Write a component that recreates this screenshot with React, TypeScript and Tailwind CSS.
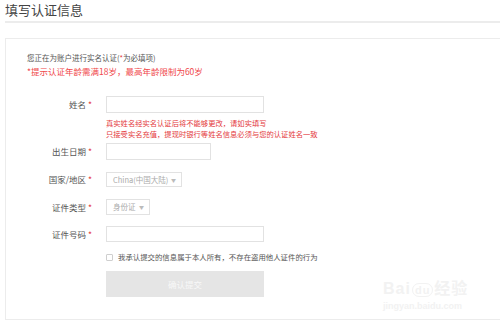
import React from 'react';

const font = { fontFamily: '"Noto Sans CJK SC", "Noto Sans", sans-serif' };

function Label({ text }: { text: string }) {
  return (
    <div className="w-[100px] shrink-0 pr-[14px] text-right text-[8.5px] leading-none text-[#555] whitespace-nowrap">
      {text} <span className="text-[#e4393c]">*</span>
    </div>
  );
}

function Select({ value, width }: { value: string; width: string }) {
  return (
    <div className={`${width} h-full flex items-center justify-between border border-[#e2e2e2] pl-[6px] pr-[5px] text-[7.5px] text-[#aaa] whitespace-nowrap`}>
      <span>{value}</span>
      <span className="text-[5px] text-[#bbb]">▼</span>
    </div>
  );
}

export default function App() {
  return (
    <div className="relative w-[500px] h-[322px] overflow-hidden bg-white" style={font}>
      <div className="h-[21px] pl-[5px] pt-[2px] text-[13px] leading-[15px] text-[#444]">填写认证信息</div>
      <div className="ml-[5px] h-[2px] bg-[#ececec]" />

      <div className="ml-[5px] mt-[15px] h-[282px] border border-r-0 border-[#ececec]">
        <div className="pl-[21px] pt-[14px]">
          <div className="text-[7.5px] leading-[10px] text-[#555]">
            您正在为账户进行实名认证(<span className="text-[#e4393c]">*</span>为必填项)
          </div>
          <div className="mt-[2px] text-[8.5px] leading-[12px] text-[#f0484b] whitespace-nowrap">*提示认证年龄需满18岁，最高年龄限制为60岁</div>
        </div>

        <div className="mt-[19px]">
          <div className="flex items-center h-[17px]">
            <Label text="姓名" />
            <div className="w-[158px] h-full border border-[#e2e2e2]" />
          </div>
          <div className="ml-[100px] mt-[5px] text-[7.3px] leading-[11px] text-[#e4393c] whitespace-nowrap">
            <div>真实姓名经实名认证后将不能够更改，请如实填写</div>
            <div>只接受实名充值，提现时银行等姓名信息必须与您的认证姓名一致</div>
          </div>

          <div className="mt-[3px] flex items-center h-[17px]">
            <Label text="出生日期" />
            <div className="w-[105px] h-full border border-[#e2e2e2]" />
          </div>

          <div className="mt-[12px] flex items-center h-[15px]">
            <Label text="国家/地区" />
            <Select value="China(中国大陆)" width="w-[76px]" />
          </div>

          <div className="mt-[12px] flex items-center h-[16px]">
            <Label text="证件类型" />
            <Select value="身份证" width="w-[44px]" />
          </div>

          <div className="mt-[11px] flex items-center h-[16px]">
            <Label text="证件号码" />
            <div className="w-[158px] h-full border border-[#e2e2e2]" />
          </div>

          <div className="ml-[100px] mt-[10px] flex items-center gap-[5px]">
            <div className="w-[7px] h-[7px] border border-[#cfcfcf] rounded-[1px]" />
            <span className="text-[7.4px] leading-[10px] text-[#555] whitespace-nowrap">我承认提交的信息属于本人所有，不存在盗用他人证件的行为</span>
          </div>

          <div className="ml-[100px] mt-[9px] w-[158px] h-[26px] flex items-center justify-center bg-[#e5e5e5] text-[8.5px] text-[#f8f8f8]">
            确认提交
          </div>
        </div>
      </div>

      <div className="absolute left-[383px] top-[280px] text-[#f2f2f2] select-none">
        <div className="text-[16px] leading-[18px] font-bold tracking-[1px]" style={{ fontFamily: '"Liberation Sans", "Noto Sans CJK SC", sans-serif' }}>
          Bai<span className="mx-[1px] rounded-full border border-[#f2f2f2] px-[2px] text-[11px]">du</span>经验
        </div>
        <div className="mt-[2px] text-[9px] leading-[11px] font-bold" style={{ fontFamily: '"Liberation Sans", sans-serif' }}>jingyan.baidu.com</div>
      </div>
    </div>
  );
}
